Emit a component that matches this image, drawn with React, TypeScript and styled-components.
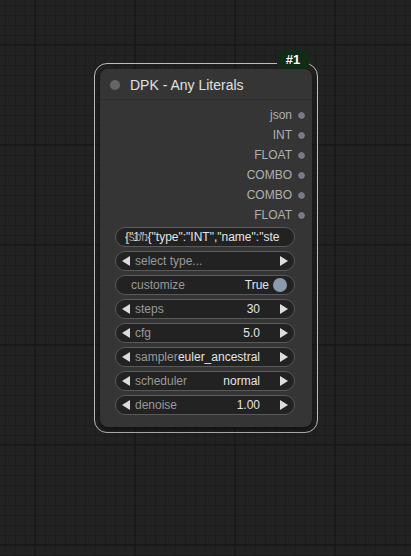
import React, { ReactElement } from 'react';
import styled, { createGlobalStyle } from 'styled-components';

const GlobalStyle = createGlobalStyle`
  html, body {
    margin: 0;
    padding: 0;
  }
  body {
    background: #222222;
    font-family: "Liberation Sans", Arial, sans-serif;
  }
`;

const Canvas = styled.div`
  width: 411px;
  height: 556px;
  box-sizing: border-box;
  overflow: hidden;
  padding: 63px 0 0 94px;
  background-color: #222222;
  background-image:
    linear-gradient(to right, #1a1a1a 2px, transparent 2px),
    linear-gradient(to bottom, #1a1a1a 2px, transparent 2px),
    linear-gradient(to right, #1c1c1c 1px, transparent 1px),
    linear-gradient(to bottom, #1c1c1c 1px, transparent 1px);
  background-size: 100px 100px, 100px 100px, 10px 10px, 10px 10px;
  background-position: 34px 44px, 34px 44px, 5px 5px, 5px 5px;
`;

const Selection = styled.div`
  position: relative;
  width: 224px;
  box-sizing: border-box;
  padding: 5px;
  border: 1px solid #bdbdbd;
  border-radius: 13px;
`;

const Badge = styled.div`
  position: absolute;
  top: -14px;
  right: 8px;
  width: 32px;
  height: 19px;
  border-radius: 5px;
  background: #112b17;
  color: #ffffff;
  font-size: 13px;
  font-weight: bold;
  display: flex;
  align-items: center;
  justify-content: center;
`;

const Node = styled.div`
  background: #353535;
  border-radius: 8px;
  box-shadow: 0 3px 6px rgba(0, 0, 0, 0.55);
  padding-bottom: 12px;
`;

const TitleBar = styled.div`
  height: 31px;
  box-sizing: border-box;
  display: flex;
  align-items: center;
  gap: 10px;
  padding-left: 10px;
  padding-top: 1px;
  border-bottom: 1px solid #2b2b2b;
  color: #e0e0e0;
  font-size: 14px;
`;

const TitleDot = styled.span`
  width: 10px;
  height: 10px;
  border-radius: 50%;
  background: #666666;
`;

const Slots = styled.div`
  padding-top: 5px;
  display: flex;
  flex-direction: column;
`;

const SlotRow = styled.div`
  height: 20px;
  display: flex;
  align-items: center;
  justify-content: flex-end;
  gap: 5px;
  padding-right: 6px;
  color: #b0b0b0;
  font-size: 12px;
`;

const SlotDot = styled.span`
  width: 9px;
  height: 9px;
  box-sizing: border-box;
  border-radius: 50%;
  background: #7a7a8a;
  border: 1px solid #262626;
`;

const Widgets = styled.div`
  margin-top: 2px;
  padding: 0 17px 0 15px;
  display: flex;
  flex-direction: column;
  gap: 4px;
`;

const Widget = styled.div<{ $pl?: number; $pr?: number }>`
  position: relative;
  height: 20px;
  box-sizing: border-box;
  display: flex;
  align-items: center;
  padding: 0 ${({ $pr }) => $pr ?? 6}px 0 ${({ $pl }) => $pl ?? 6}px;
  border: 1px solid #595959;
  border-radius: 10px;
  background: #222222;
  font-size: 12px;
  white-space: nowrap;
  overflow: hidden;
`;

const Label = styled.span<{ $ml?: number }>`
  color: #999999;
  margin-left: ${({ $ml }) => $ml ?? 0}px;
  flex: none;
`;

const Spacer = styled.span`
  flex: 1;
`;

const Value = styled.span<{ $mr?: number }>`
  color: #e4e4e4;
  margin-right: ${({ $mr }) => $mr ?? 0}px;
  flex: none;
`;

const TextValue = styled.span`
  color: #e4e4e4;
  overflow: hidden;
  flex: 1;
`;

const OverLabel = styled.span`
  position: absolute;
  left: 10px;
  color: #999999;
`;

const Knob = styled.span`
  width: 14px;
  height: 14px;
  border-radius: 50%;
  background: #8a9bae;
  margin-left: 4px;
`;

function Arrow({ dir }: { dir: 'left' | 'right' }): ReactElement {
  return (
    <svg width="8" height="10" viewBox="0 0 8 10">
      <polygon points={dir === 'left' ? '8,0 8,10 0,5' : '0,0 0,10 8,5'} fill="#dddddd" />
    </svg>
  );
}

function Combo({ label, value }: { label: string; value?: string }): ReactElement {
  return (
    <Widget>
      <Arrow dir="left" />
      <Label $ml={5}>{label}</Label>
      <Spacer />
      {value && <Value $mr={20}>{value}</Value>}
      <Arrow dir="right" />
    </Widget>
  );
}

const outputs = ['json', 'INT', 'FLOAT', 'COMBO', 'COMBO', 'FLOAT'];

function App(): ReactElement {
  return (
    <Canvas>
      <GlobalStyle />
      <Selection>
        <Badge>#1</Badge>
        <Node>
          <TitleBar>
            <TitleDot />
            DPK - Any Literals
          </TitleBar>
          <Slots>
            {outputs.map((name, i) => (
              <SlotRow key={i}>
                {name}
                <SlotDot />
              </SlotRow>
            ))}
          </Slots>
          <Widgets>
            <Widget $pl={9} $pr={14}>
              <OverLabel>json</OverLabel>
              <TextValue>{'{"1":{"type":"INT","name":"steps","value":30}}'}</TextValue>
            </Widget>
            <Combo label="select type..." />
            <Widget $pl={15} $pr={7}>
              <Label>customize</Label>
              <Spacer />
              <Value>True</Value>
              <Knob />
            </Widget>
            <Combo label="steps" value="30" />
            <Combo label="cfg" value="5.0" />
            <Combo label="sampler" value="euler_ancestral" />
            <Combo label="scheduler" value="normal" />
            <Combo label="denoise" value="1.00" />
          </Widgets>
        </Node>
      </Selection>
    </Canvas>
  );
}

export default App;
